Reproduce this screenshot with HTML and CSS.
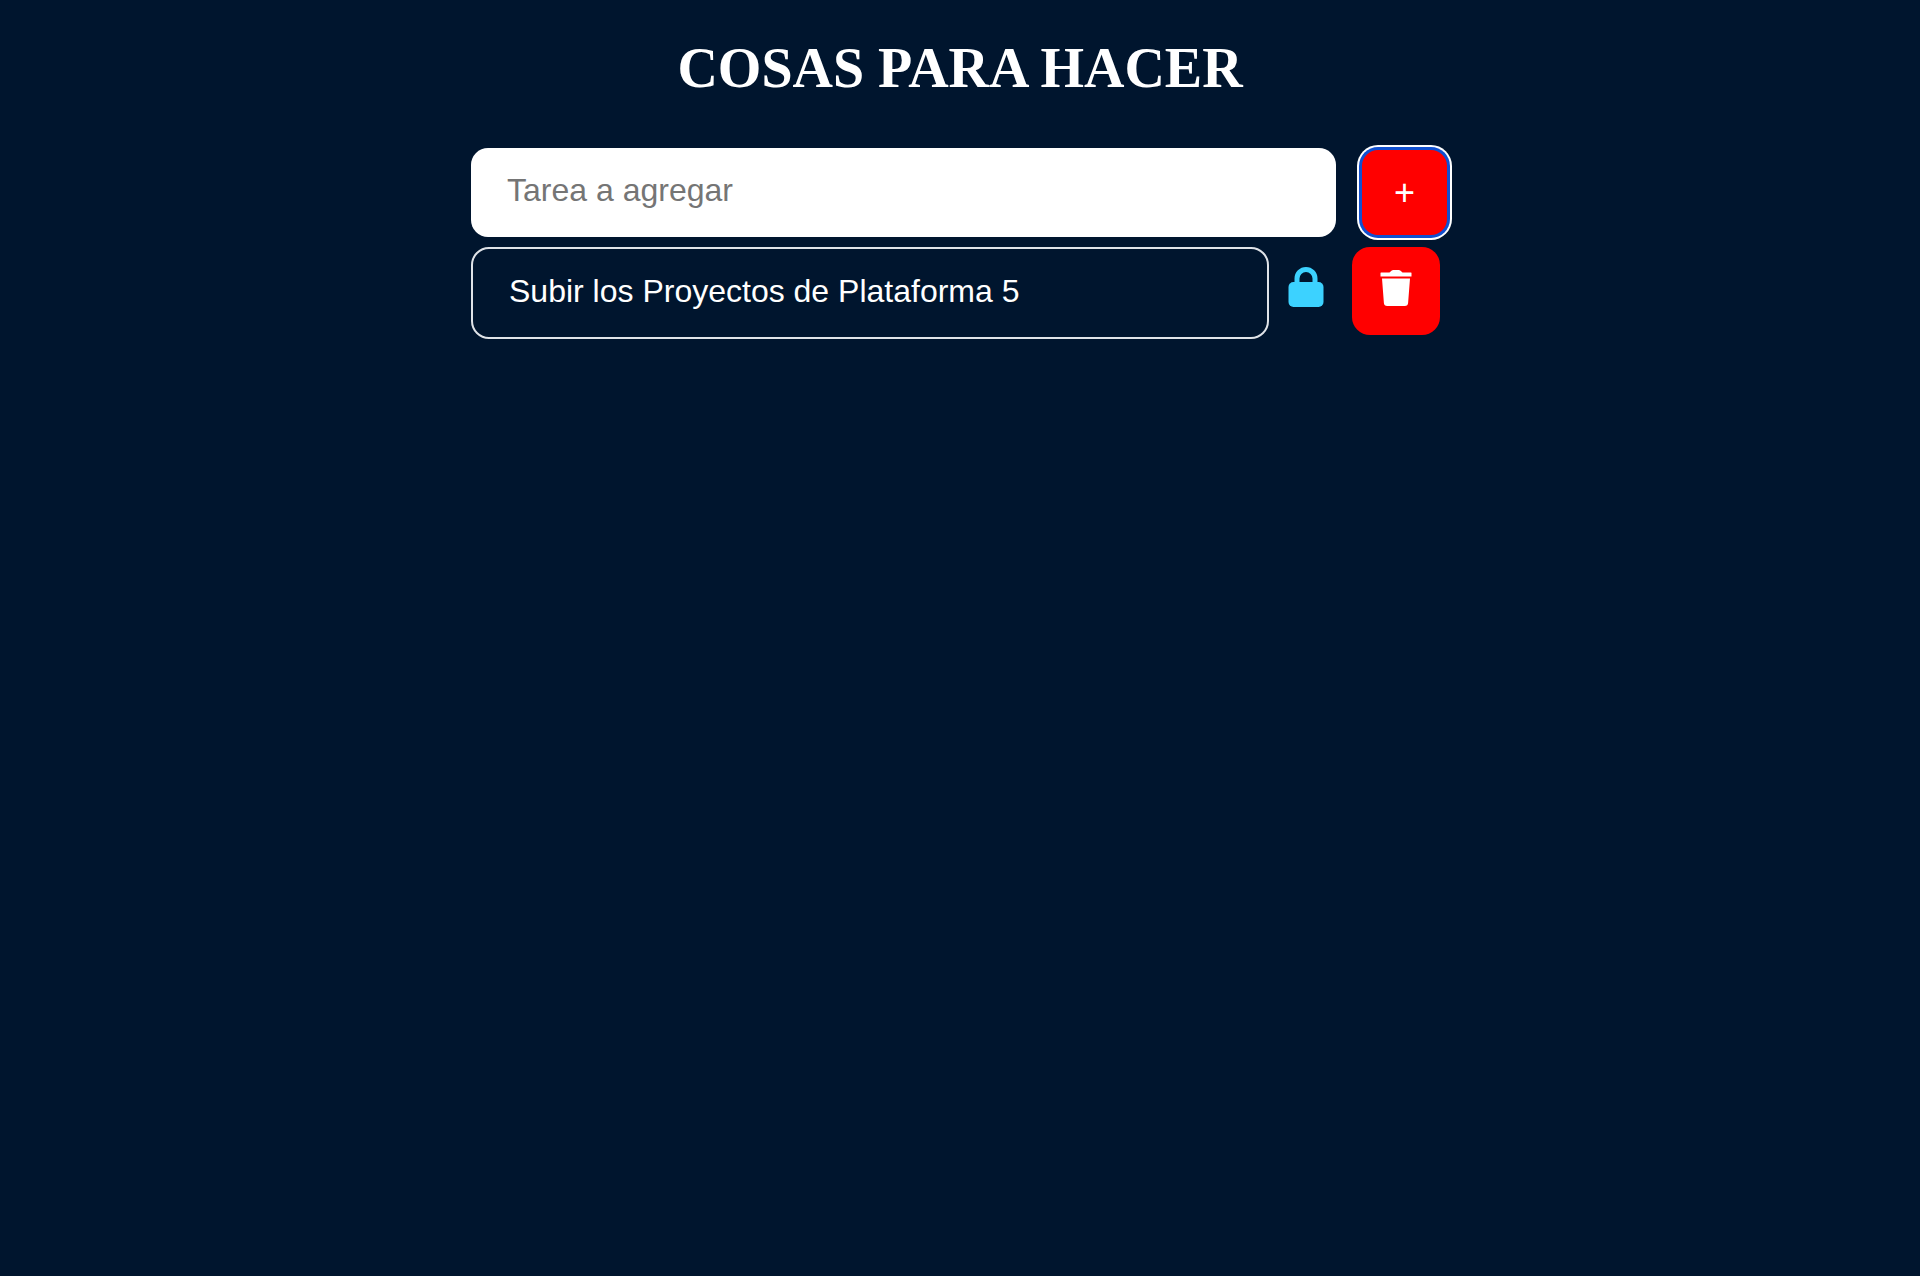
FILE: index.html
```html
<!DOCTYPE html>
<html lang="es">
<head>
  <meta charset="utf-8">
  <meta name="viewport" content="width=device-width, initial-scale=1">
  <title>Cosas para hacer</title>
  <link rel="stylesheet" href="styles.css">
</head>
<body>
  <main class="todo">
    <h1 class="title">COSAS PARA HACER</h1>
    <form class="add-form">
      <input class="add-input" type="text" placeholder="Tarea a agregar" aria-label="Tarea a agregar">
      <button class="btn btn-add" type="button" aria-label="Agregar">+</button>
    </form>
    <ul class="tasks">
      <li class="task">
        <span class="task-text">Subir los Proyectos de Plataforma 5</span>
        <button class="lock" type="button" aria-label="Bloquear">
          <svg width="36" height="40" viewBox="0 0 36 40" aria-hidden="true">
            <path d="M9 17V11.500a9 9 0 0 1 18 0V17" fill="none" stroke="currentColor" stroke-width="5"/>
            <rect x="0.500" y="15" width="35" height="25" rx="5" fill="currentColor"/>
          </svg>
        </button>
        <button class="btn" type="button" aria-label="Eliminar">
          <svg width="32" height="36" viewBox="0 0 32 36" aria-hidden="true">
            <path d="M1 2.500h8.500q2-2.500 3.500-2.500h6q1.500 0 3.500 2.500H31q.500 0 .500.500v3.500H.500V3q0-.500.500-.500z" fill="currentColor"/>
            <path d="M2 8.500h28l-1.900 24.500q-.200 3-3.300 3H7.200q-3.100 0-3.300-3z" fill="currentColor"/>
          </svg>
        </button>
      </li>
    </ul>
  </main>
</body>
</html>
```
FILE: styles.css
```css
* {
  box-sizing: border-box;
}

body {
  margin: 0;
  background: #00152e;
  color: #fff;
  font-family: "Liberation Sans", Arial, sans-serif;
  font-size: 32px;
}

.todo {
  width: 90%;
  max-width: 978px;
  margin: 0 auto;
  padding-top: 36px;
}

.title {
  margin: 0 0 48px;
  font-family: "Liberation Serif", "Times New Roman", serif;
  font-size: 56px;
  line-height: 64px;
  text-align: center;
}

.add-form {
  display: flex;
  align-items: center;
  gap: 24px;
}

.add-input {
  flex: 1;
  min-width: 0;
  height: 89px;
  padding: 0 36px 4px;
  border: 0;
  border-radius: 17px;
  background: #fff;
  color: #00152e;
  font: inherit;
}

.add-input::placeholder {
  color: #757575;
}

.btn {
  display: flex;
  flex: none;
  align-items: center;
  justify-content: center;
  width: 88px;
  height: 88px;
  padding: 0 0 6px;
  border: 0;
  border-radius: 18px;
  background: #f00;
  color: #fff;
  font: inherit;
  cursor: pointer;
}

.btn-add {
  width: 89px;
  height: 89px;
  padding: 0;
  border: 2px solid #1150d0;
  box-shadow: 0 0 0 1px #1150d0, 0 0 0 3px #fff;
  font-size: 36px;
}

.tasks {
  margin: 0;
  padding: 10px 9px 0 0;
  list-style: none;
}

.task {
  display: flex;
  align-items: flex-start;
}

.task-text {
  flex: 1;
  padding: 24px 36px 28px;
  border: 2px solid #dfe3e8;
  border-radius: 18px;
  line-height: 36px;
}

.lock {
  display: flex;
  margin: 20px 28px 0 19px;
  padding: 0;
  border: 0;
  background: none;
  color: #3cd2ff;
  cursor: pointer;
}
```
